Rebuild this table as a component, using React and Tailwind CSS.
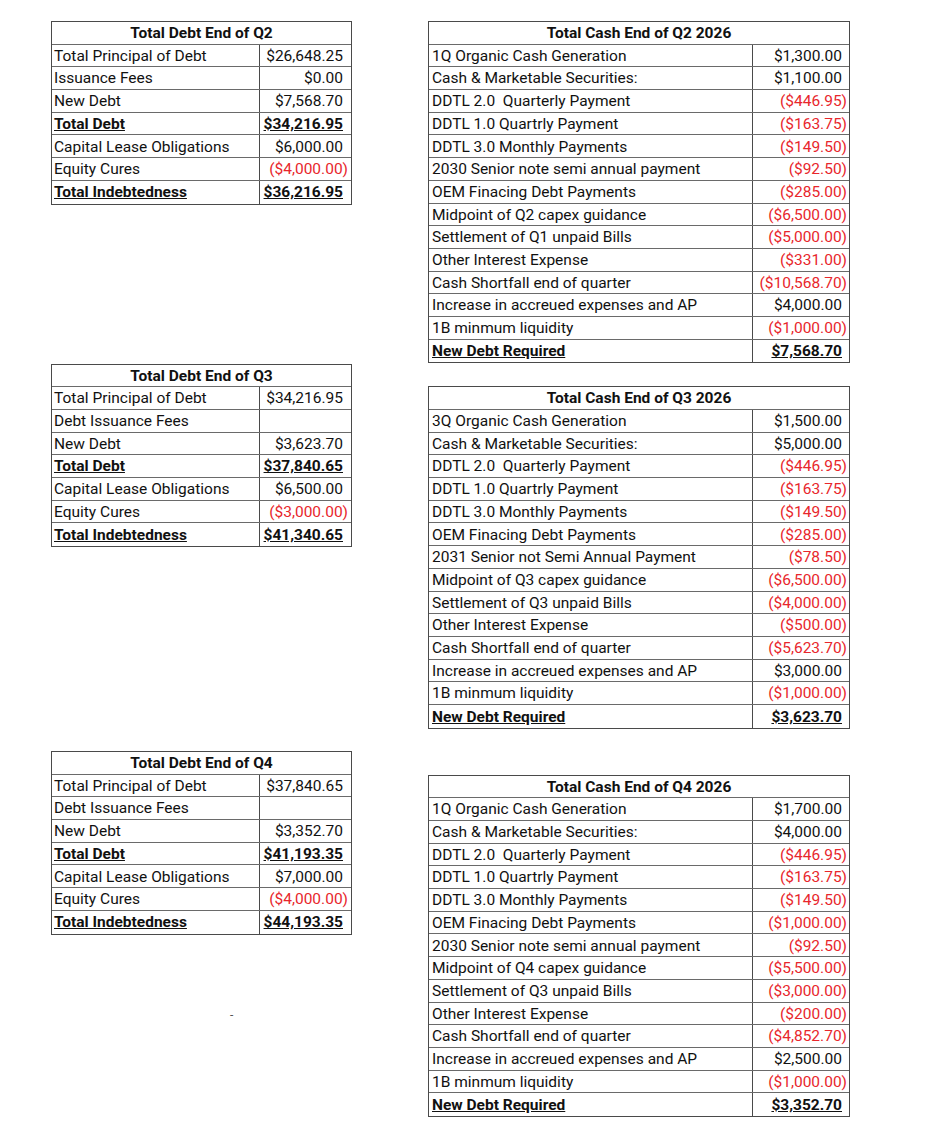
import React from 'react';

const q2Debt = [
  ['Total Principal of Debt', '$26,648.25'],
  ['Issuance Fees', '$0.00'],
  ['New Debt', '$7,568.70'],
  ['Total Debt', '$34,216.95', 'bold'],
  ['Capital Lease Obligations', '$6,000.00'],
  ['Equity Cures', '($4,000.00)'],
  ['Total Indebtedness', '$36,216.95', 'bold'],
];

const q3Debt = [
  ['Total Principal of Debt', '$34,216.95'],
  ['Debt Issuance Fees', ''],
  ['New Debt', '$3,623.70'],
  ['Total Debt', '$37,840.65', 'bold'],
  ['Capital Lease Obligations', '$6,500.00'],
  ['Equity Cures', '($3,000.00)'],
  ['Total Indebtedness', '$41,340.65', 'bold'],
];

const q4Debt = [
  ['Total Principal of Debt', '$37,840.65'],
  ['Debt Issuance Fees', ''],
  ['New Debt', '$3,352.70'],
  ['Total Debt', '$41,193.35', 'bold'],
  ['Capital Lease Obligations', '$7,000.00'],
  ['Equity Cures', '($4,000.00)'],
  ['Total Indebtedness', '$44,193.35', 'bold'],
];

const q2Cash = [
  ['1Q Organic Cash Generation', '$1,300.00'],
  ['Cash & Marketable Securities:', '$1,100.00'],
  ['DDTL 2.0  Quarterly Payment', '($446.95)'],
  ['DDTL 1.0 Quartrly Payment', '($163.75)'],
  ['DDTL 3.0 Monthly Payments', '($149.50)'],
  ['2030 Senior note semi annual payment', '($92.50)'],
  ['OEM Finacing Debt Payments', '($285.00)'],
  ['Midpoint of Q2 capex guidance', '($6,500.00)'],
  ['Settlement of Q1 unpaid Bills', '($5,000.00)'],
  ['Other Interest Expense', '($331.00)'],
  ['Cash Shortfall end of quarter', '($10,568.70)'],
  ['Increase in accreued expenses and AP', '$4,000.00'],
  ['1B minmum liquidity', '($1,000.00)'],
  ['New Debt Required', '$7,568.70', 'bold'],
];

const q3Cash = [
  ['3Q Organic Cash Generation', '$1,500.00'],
  ['Cash & Marketable Securities:', '$5,000.00'],
  ['DDTL 2.0  Quarterly Payment', '($446.95)'],
  ['DDTL 1.0 Quartrly Payment', '($163.75)'],
  ['DDTL 3.0 Monthly Payments', '($149.50)'],
  ['OEM Finacing Debt Payments', '($285.00)'],
  ['2031 Senior not Semi Annual Payment', '($78.50)'],
  ['Midpoint of Q3 capex guidance', '($6,500.00)'],
  ['Settlement of Q3 unpaid Bills', '($4,000.00)'],
  ['Other Interest Expense', '($500.00)'],
  ['Cash Shortfall end of quarter', '($5,623.70)'],
  ['Increase in accreued expenses and AP', '$3,000.00'],
  ['1B minmum liquidity', '($1,000.00)'],
  ['New Debt Required', '$3,623.70', 'bold'],
];

const q4Cash = [
  ['1Q Organic Cash Generation', '$1,700.00'],
  ['Cash & Marketable Securities:', '$4,000.00'],
  ['DDTL 2.0  Quarterly Payment', '($446.95)'],
  ['DDTL 1.0 Quartrly Payment', '($163.75)'],
  ['DDTL 3.0 Monthly Payments', '($149.50)'],
  ['OEM Finacing Debt Payments', '($1,000.00)'],
  ['2030 Senior note semi annual payment', '($92.50)'],
  ['Midpoint of Q4 capex guidance', '($5,500.00)'],
  ['Settlement of Q3 unpaid Bills', '($3,000.00)'],
  ['Other Interest Expense', '($200.00)'],
  ['Cash Shortfall end of quarter', '($4,852.70)'],
  ['Increase in accreued expenses and AP', '$2,500.00'],
  ['1B minmum liquidity', '($1,000.00)'],
  ['New Debt Required', '$3,352.70', 'bold'],
];

const Sheet = ({ title, rows, labelWidth, valueWidth, labelPad, negPad, posPad }) => (
  <div className="border border-[#4a4a4a] w-fit">
    <div className="h-[22.7px] pt-[2px] border-b border-[#6a6a6a] flex items-center justify-center font-bold">
      {title}
    </div>
    {rows.map(([label, value, kind], i) => {
      const neg = value.startsWith('(');
      const bold = kind === 'bold';
      return (
        <div
          key={i}
          className={`flex h-[22.7px] pt-[2px] ${i < rows.length - 1 ? 'border-b border-[#6a6a6a]' : ''}`}
        >
          <div
            className={`${labelWidth} ${labelPad} -mt-[2px] pt-[2px] flex items-center whitespace-pre border-r border-[#4a4a4a] ${bold ? 'font-bold underline' : ''}`}
          >
            {label}
          </div>
          <div
            className={`${valueWidth} ${neg ? negPad : posPad} flex items-center justify-end whitespace-pre ${neg ? 'text-[#e8262c]' : ''} ${bold ? 'font-bold underline' : ''}`}
          >
            {value}
          </div>
        </div>
      );
    })}
  </div>
);

const DebtTable = ({ title, rows }) => (
  <Sheet
    title={title}
    rows={rows}
    labelWidth="w-[208px]"
    valueWidth="w-[91px]"
    labelPad="pl-[2px]"
    negPad="pr-[3px]"
    posPad="pr-[8px]"
  />
);

const CashTable = ({ title, rows }) => (
  <Sheet
    title={title}
    rows={rows}
    labelWidth="w-[324px]"
    valueWidth="w-[96px]"
    labelPad="pl-[3px]"
    negPad="pr-[2px]"
    posPad="pr-[7px]"
  />
);

export default function App() {
  return (
    <div className="w-[936px] h-[1136px] bg-white text-[#111] text-[15.5px] leading-none font-['Roboto',_'Liberation_Sans',_sans-serif] flex">
      <div className="ml-[51px] pt-[21px] flex flex-col">
        <DebtTable title="Total Debt End of Q2" rows={q2Debt} />
        <div className="mt-[159px]">
          <DebtTable title="Total Debt End of Q3" rows={q3Debt} />
        </div>
        <div className="mt-[204px]">
          <DebtTable title="Total Debt End of Q4" rows={q4Debt} />
        </div>
        <div className="mt-[74px] ml-[179px] text-[#555] text-[12px]">-</div>
      </div>
      <div className="ml-[76px] pt-[21px] flex flex-col">
        <CashTable title="Total Cash End of Q2 2026" rows={q2Cash} />
        <div className="mt-[23px]">
          <CashTable title="Total Cash End of Q3 2026" rows={q3Cash} />
        </div>
        <div className="mt-[46px]">
          <CashTable title="Total Cash End of Q4 2026" rows={q4Cash} />
        </div>
      </div>
    </div>
  );
}
